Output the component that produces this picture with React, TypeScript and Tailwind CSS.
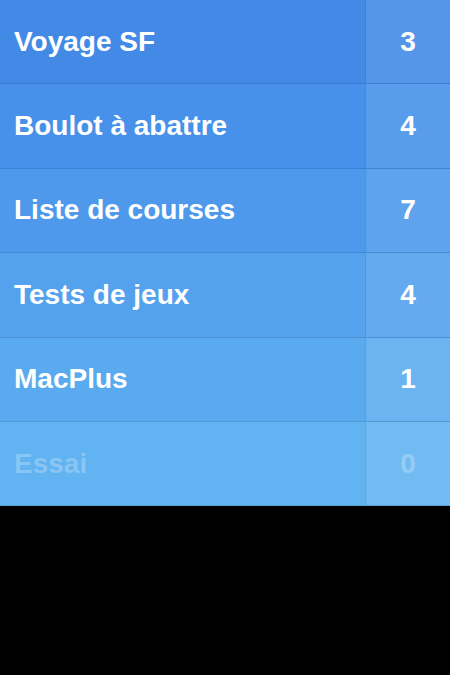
import React from "react";

type List = { name: string; count: number; bg: string; faded?: boolean };

const LISTS: List[] = [
  { name: "Voyage SF", count: 3, bg: "bg-[#438ae7]" },
  { name: "Boulot à abattre", count: 4, bg: "bg-[#4891ea]" },
  { name: "Liste de courses", count: 7, bg: "bg-[#4e99eb]" },
  { name: "Tests de jeux", count: 4, bg: "bg-[#54a1ed]" },
  { name: "MacPlus", count: 1, bg: "bg-[#5aaaef]" },
  { name: "Essai", count: 0, bg: "bg-[#62b3f1]", faded: true },
];

export default function App() {
  return (
    <div className="w-[450px] h-[675px] bg-black font-['Liberation_Sans',Arial,sans-serif] overflow-hidden">
      {LISTS.map(l => (
        <div key={l.name} className={`flex h-[84.375px] border-b border-black/10 ${l.bg}`}>
          <div
            className={`flex-1 flex items-center pl-[14px] text-[28px] font-bold border-r border-black/5 ${
              l.faded ? "text-white/25" : "text-white"
            }`}
          >
            {l.name}
          </div>
          <div
            className={`w-[84px] flex items-center justify-center bg-white/10 text-[28px] font-bold ${
              l.faded ? "text-white/25" : "text-white"
            }`}
          >
            {l.count}
          </div>
        </div>
      ))}
    </div>
  );
}
